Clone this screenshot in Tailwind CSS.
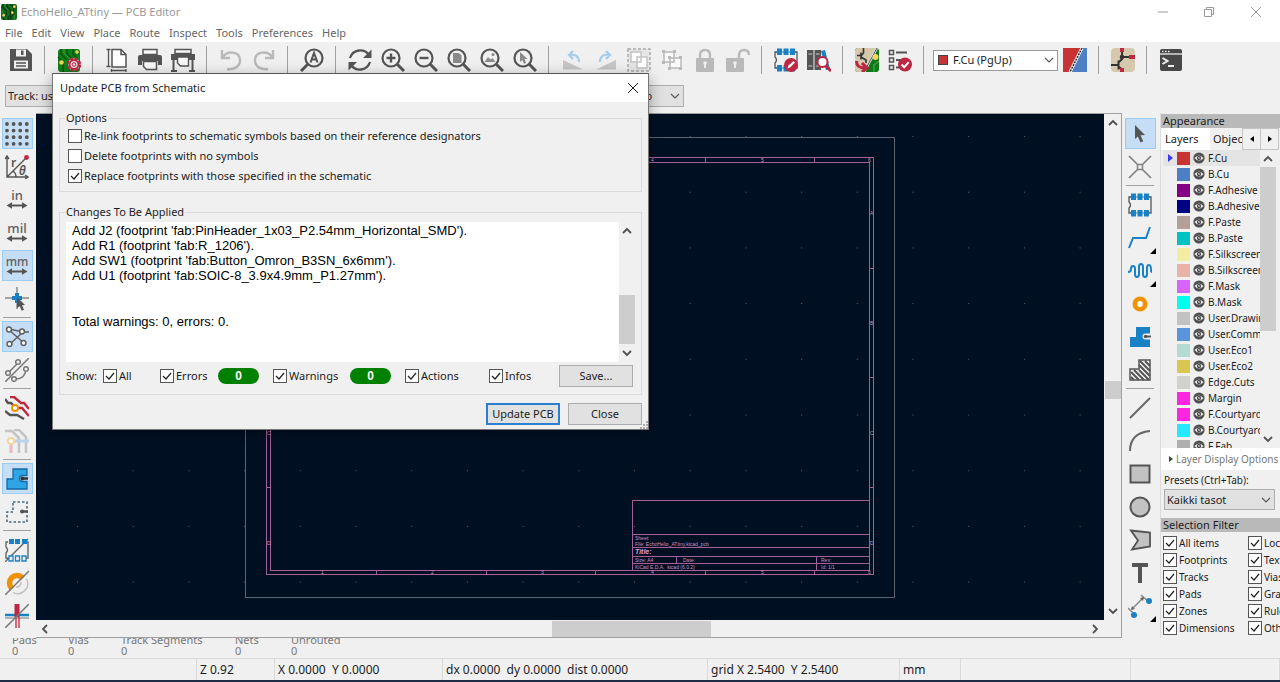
<!DOCTYPE html>
<html lang="en">
<head>
<meta charset="utf-8">
<title>EchoHello_ATtiny — PCB Editor</title>
<script src="https://cdn.jsdelivr.net/npm/@tailwindcss/browser@4"></script>
</head>
<body class="relative flex h-screen flex-col overflow-hidden bg-[#f0f0f0] font-['Noto_Sans',sans-serif] text-[11px] leading-4 text-[#1c1c1c]">

<svg class="hidden" aria-hidden="true">
  <defs>
    <symbol id="i-app" viewBox="0 0 24 24"><rect width="24" height="24" rx="3" fill="#136b1c"/><path d="M3 0v5l5 5v6l-4 4v4M9 0v4l5 5v8l-3 3v4M14 0l5 5v10l-4 4v5" fill="none" stroke="#0a3d10" stroke-width="2"/><path d="M6 0v4l5 5M0 10l4 4v6M20 24v-8" fill="none" stroke="#4fa04c" stroke-width="1"/><circle cx="20" cy="4" r="2" fill="#f3d45c"/><circle cx="17" cy="13" r="2" fill="#f3d45c"/><circle cx="4" cy="17" r="2" fill="#f3d45c"/></symbol>
    <symbol id="i-save" viewBox="0 0 24 24"><path d="M2 1h16l5 5v17H1V1z" fill="#545454"/><path d="M7 1.500h10v7H7z" fill="#f0f0f0"/><path d="M12 2.500h2.500V7H12z" fill="#545454"/><path d="M5 12.500h14v8H5z" fill="#f0f0f0"/><path d="M7 15h10M7 18h10" stroke="#545454" stroke-width="1.300"/></symbol>
    <symbol id="i-update" viewBox="0 0 24 24"><rect x="1" y="1" width="22" height="23" rx="3" fill="#0f7f1b"/><path d="M4 1v5l6 6M10 1v5l4 4M16 1v5l3 3M1 9l5 5v10" fill="none" stroke="#07560f" stroke-width="1.500"/><path d="M7 1v4l6 6" stroke="#3fa03f" fill="none"/><circle cx="4.500" cy="14.500" r="2.200" fill="#f3d45c"/><circle cx="20" cy="4" r="1.800" fill="#f3d45c"/><circle cx="17" cy="16.500" r="6" fill="#ddd" stroke="#bf2641" stroke-width="2.400" stroke-dasharray="3 1.710"/><circle cx="17" cy="16.500" r="4.500" fill="#ddd" stroke="#bf2641" stroke-width="1.800"/><circle cx="17" cy="16.500" r="1.800" fill="none" stroke="#bf2641"/></symbol>
    <symbol id="i-page" viewBox="0 0 24 24"><path d="M7 1.500h9l5 5V19H7z" fill="#fff" stroke="#545454" stroke-width="1.500"/><path d="M16 1.500v5h5" fill="none" stroke="#545454" stroke-width="1.500"/><path d="M3.500 1v18M1.500 1.500h4M1.500 18.500h4M6 22.500h15M6.500 21v3M21 21v3" stroke="#545454" stroke-width="1.300"/></symbol>
    <symbol id="i-print" viewBox="0 0 24 24"><path d="M5 1.500h14v5H5z" fill="#f8f8f8" stroke="#545454" stroke-width="1.500"/><path d="M2 7h20q2 0 2 2v8h-4v-4H4v4H0V9q0-2 2-2z" fill="#545454"/><path d="M5.500 13.500h13v8h-10l-3-3z" fill="#f8f8f8" stroke="#545454" stroke-width="1.500"/></symbol>
    <symbol id="i-plot" viewBox="0 0 24 24"><path d="M4 1.500h16v4H4z" fill="#f8f8f8" stroke="#545454" stroke-width="1.500"/><path d="M0 6h24v6H0z" fill="#545454"/><path d="M6.500 9h11v9h-8l-3-3z" fill="#f8f8f8" stroke="#545454" stroke-width="1.400"/><path d="M2.500 12v10M21.500 12v10M0 23h6M18 23h6" stroke="#545454" stroke-width="2"/></symbol>
    <symbol id="i-undo" viewBox="0 0 24 24"><path d="M3 2v8h8M3.500 9.500C8 2 21 3 21 12.500c0 6-6 9.500-13 8.500" fill="none" stroke="#b9b9b9" stroke-width="2.400"/></symbol>
    <symbol id="i-redo" viewBox="0 0 24 24"><path d="M21 2v8h-8M20.500 9.500C16 2 3 3 3 12.500c0 6 6 9.500 13 8.500" fill="none" stroke="#b9b9b9" stroke-width="2.400"/></symbol>
    <symbol id="i-find" viewBox="0 0 24 24"><circle cx="14" cy="10" r="8.500" fill="none" stroke="#545454" stroke-width="2.200"/><path d="M8 16l-7 7" stroke="#545454" stroke-width="3"/><path d="M10.500 14.500l3.500-9.500 3.500 9.500M11.500 11.500h5" fill="none" stroke="#545454" stroke-width="2"/></symbol>
    <symbol id="i-refresh" viewBox="0 0 24 24"><path d="M2 10C5 1 16 0 21 7M22 14c-3 9-14 10-19 3" fill="none" stroke="#545454" stroke-width="2.300"/><path d="M23.500 1.500v8.500H15zM.500 22.500V14H9z" fill="#545454"/></symbol>
    <symbol id="i-lens" viewBox="0 0 24 24"><circle cx="10" cy="10" r="8.500" fill="none" stroke="#545454" stroke-width="2.200"/><path d="M16 16l7 7" stroke="#545454" stroke-width="3"/></symbol>
    <symbol id="i-zin" viewBox="0 0 24 24"><use href="#i-lens"/><path d="M5.500 10h9M10 5.500v9" stroke="#545454" stroke-width="2.400"/></symbol>
    <symbol id="i-zout" viewBox="0 0 24 24"><use href="#i-lens"/><path d="M5.500 10h9" stroke="#545454" stroke-width="2.400"/></symbol>
    <symbol id="i-zpage" viewBox="0 0 24 24"><use href="#i-lens"/><path d="M6 5h6l2.500 2.500V15H6z" fill="#8a8a8a"/></symbol>
    <symbol id="i-zobj" viewBox="0 0 24 24"><use href="#i-lens"/><path d="M4.500 14l3.500-5 2.500 2.500L12.500 10l3 4z" fill="#8a8a8a"/><circle cx="13" cy="6.500" r="1.500" fill="#8a8a8a"/></symbol>
    <symbol id="i-zsel" viewBox="0 0 24 24"><use href="#i-lens"/><path d="M7 4l7.500 7h-3l1.500 4-2 .8L9.300 12 7 14z" fill="#8a8a8a"/></symbol>
    <symbol id="i-ccw" viewBox="0 0 24 24"><path d="M2 12v9.500h20z" fill="#c6c6c6"/><path d="M12 3L8 7l4 4M8.500 7C14 6 18 8 18 14" fill="none" stroke="#a3cde8" stroke-width="2.200"/></symbol>
    <symbol id="i-cw" viewBox="0 0 24 24"><path d="M22 12v9.500H2z" fill="#c6c6c6"/><path d="M12 3l4 4-4 4M15.500 7C10 6 6 8 6 14" fill="none" stroke="#a3cde8" stroke-width="2.200"/></symbol>
    <symbol id="i-group" viewBox="0 0 24 24"><rect x="1" y="1" width="22" height="22" fill="#e6e6e6" stroke="#aaa" stroke-width="1.500" stroke-dasharray="3 2"/><path d="M4 4h10v10H4zM10 9h10v11H10z" fill="#fff" stroke="#c4c4c4" stroke-width="1.500"/></symbol>
    <symbol id="i-ungroup" viewBox="0 0 24 24"><path d="M4 4h10v10H4zM10 10h11v10H10z" fill="#fafafa" stroke="#b9b9b9" stroke-width="1.500"/><path d="M2 2h3v3H2zM13 2h3v3h-3zM2 13h3v3H2zM8 8h3v3H8zM19 8h3v3h-3zM8 19h3v3H8zM19 19h3v3h-3z" fill="#b9b9b9"/></symbol>
    <symbol id="i-lock" viewBox="0 0 24 24"><path d="M7 11V7q0-5 5-5t5 5v4" fill="none" stroke="#b9b9b9" stroke-width="2.400"/><rect x="3" y="10" width="18" height="14" rx="1" fill="#b9b9b9"/><circle cx="12" cy="15" r="1.800" fill="#f0f0f0"/><path d="M12 15v5" stroke="#f0f0f0" stroke-width="1.800"/></symbol>
    <symbol id="i-unlock" viewBox="0 0 24 24"><path d="M13 11V7q0-5 5-5t5 5" fill="none" stroke="#b9b9b9" stroke-width="2.400"/><rect x="0" y="10" width="18" height="14" rx="1" fill="#b9b9b9"/><circle cx="9" cy="15" r="1.800" fill="#f0f0f0"/><path d="M9 15v5" stroke="#f0f0f0" stroke-width="1.800"/></symbol>
    <symbol id="i-fp" viewBox="0 0 24 24"><path d="M3 4H1v5q3 3 0 6v5h2M21 4h2v16h-2" fill="none" stroke="#545454" stroke-width="1.300"/><path d="M3 0.500h5v6.500H3zM9.500 0.500h5v6.500h-5zM16 0.500h5v6.500h-5zM3 17h5v6.500H3zM9.500 17h5v6.500h-5zM16 17h5v6.500h-5z" fill="#1a81c4"/><path d="M2 4h20M2 20h20" stroke="#1a81c4"/></symbol>
    <symbol id="i-fpedit" viewBox="0 0 24 24"><use href="#i-fp"/><circle cx="17" cy="17" r="7" fill="#bf2641"/><path d="M13.500 20.500l1-3 5-4.500 1.500 1.500-5 5z" fill="#fff"/></symbol>
    <symbol id="i-lib" viewBox="0 0 24 24"><path d="M0 2h6.500v20H0zM7.500 2H14v20H7.500z" fill="#545454"/><path d="M1.500 6h3.500M9 6h3.500M1.500 18h3.500M9 18h3.500" stroke="#ccc"/><path d="M14 3l4-1 5 19-4 1z" fill="#1a81c4"/><circle cx="15.500" cy="14" r="5" fill="#fff" stroke="#bf2641" stroke-width="2"/><path d="M19 18l5 5" stroke="#bf2641" stroke-width="3"/></symbol>
    <symbol id="i-sync" viewBox="0 0 24 24"><rect width="24" height="24" rx="3" fill="#0c7a17"/><path d="M3 0h18L8 24H3q-3 0-3-3V3q0-3 3-3z" fill="#d5c8ac"/><path d="M8.500 0v5L6 8M2 7.500h4M6 4.500v7M6 9l5 3v3" fill="none" stroke="#333" stroke-width="1.600"/><path d="M22 0L9 24" stroke="#eee" stroke-width="2.500"/><path d="M22 0L9 24" stroke="#444"/><path d="M24 13l-5 4v7" fill="none" stroke="#3fa03f" stroke-width="1.500"/><circle cx="20.500" cy="9" r="3" fill="#f3d45c"/><path d="M1.500 13c0 6 4 7 9 7M7 15l5 5-5 4" fill="none" stroke="#bf2641" stroke-width="3"/></symbol>
    <symbol id="i-drc" viewBox="0 0 24 24"><path d="M1.500 2.500h4v4h-4zM1.500 10h4v4h-4zM1.500 17.500h4v4h-4z" fill="none" stroke="#545454" stroke-width="1.500"/><path d="M8 4.500h11M8 12h6M8 19.500h4" stroke="#545454" stroke-width="1.800"/><circle cx="17" cy="16.500" r="7" fill="#bf2641"/><path d="M13.500 16.500l2.700 2.700 4.500-5" fill="none" stroke="#fff" stroke-width="2"/></symbol>
    <symbol id="i-pair" viewBox="0 0 24 24"><path d="M0 0h24v24H0z" fill="#4d7fc4"/><path d="M0 0h19L7 24H0z" fill="#c83434"/><path d="M19 0L7 24" stroke="#fff" stroke-width="3"/><path d="M19 0L7 24" stroke="#222" stroke-width="1.500" stroke-dasharray="2 1"/></symbol>
    <symbol id="i-sch" viewBox="0 0 24 24"><rect width="24" height="24" rx="4" fill="#d5c8ac"/><path d="M11 3v8l-3 3M11 9h9M0 17h7M7.500 12.500v9M8 19l4 3" fill="none" stroke="#333" stroke-width="2"/><path d="M9 0h4v4H9zM18 7h6v4h-6zM9 20h4v4H9z" fill="#bf2641"/><circle cx="11" cy="9" r="2.300" fill="#333"/></symbol>
    <symbol id="i-term" viewBox="0 0 24 24"><rect x="1" y="1" width="22" height="22" rx="2" fill="#484848"/><path d="M1 6h22" stroke="#eee" stroke-width="1.300"/><path d="M3 3.500h1.500M6 3.500h1.500M9 3.500h1.500" stroke="#eee" stroke-width="1.500"/><path d="M3.500 10l5 3-5 3M9 18h6" fill="none" stroke="#eee" stroke-width="2"/></symbol>

    <symbol id="i-grid" viewBox="0 0 24 24"><g fill="none" stroke="#545454" stroke-width="3.800" stroke-linecap="round" stroke-dasharray="0 6.600"><path d="M2 2h21M2 8.600h21M2 15.200h21M2 21.800h21"/></g></symbol>
    <symbol id="i-polar" viewBox="0 0 24 24"><path d="M2 1v21h21M0 4l2-3 2 3M20 20l3 2-3 2M2 22L21 3M8 16q3 2 3 6" fill="none" stroke="#545454" stroke-width="1.400"/><circle cx="21.500" cy="2.500" r="2.400" fill="#bf2641"/><text x="6" y="12" font-size="12" font-weight="600" fill="#545454">r</text><text x="14" y="20" font-size="12" font-style="italic" font-weight="600" fill="#545454">θ</text></symbol>
    <symbol id="i-arrow2" viewBox="0 0 24 24"><path d="M5 17.500h14" stroke="#545454" stroke-width="2"/><path d="M1.500 17.500l5.500-3.200v6.400zM22.500 17.500L17 14.300v6.400z" fill="#545454"/></symbol>
    <symbol id="i-in" viewBox="0 0 24 24"><use href="#i-arrow2"/><text x="12" y="12" text-anchor="middle" font-size="13" font-weight="500" fill="#606060">in</text></symbol>
    <symbol id="i-mil" viewBox="0 0 24 24"><use href="#i-arrow2"/><text x="12" y="12" text-anchor="middle" font-size="13" font-weight="500" fill="#606060">mil</text></symbol>
    <symbol id="i-mm" viewBox="0 0 24 24"><use href="#i-arrow2"/><text x="12" y="12" text-anchor="middle" font-size="12" font-weight="500" fill="#606060">mm</text></symbol>
    <symbol id="i-cross" viewBox="0 0 24 24"><path d="M0 11h24M12 0v22" stroke="#888" stroke-width="1.500"/><path d="M7 11h10M12 6v10" stroke="#1a81c4" stroke-width="4"/><path d="M12 10l8 8-3 .3 2 4.500-2.300 1-1.900-4.600L12 21z" fill="#545454"/></symbol>
    <symbol id="i-rats" viewBox="0 0 24 24"><path d="M4 5L19 18M5 19L18 7M4 4l14 3h6" stroke="#606060" stroke-width="1.500" fill="none"/><g fill="#fff" stroke="#606060" stroke-width="1.500"><circle cx="4" cy="4.500" r="2.400"/><circle cx="17" cy="6.500" r="2.400"/><circle cx="4.500" cy="19" r="2.400"/><circle cx="18.500" cy="18" r="2.400"/></g></symbol>
    <symbol id="i-curved" viewBox="0 0 24 24"><path d="M0 24L24 0M4 14l9-9M9 21q11 1 12-10" fill="none" stroke="#777" stroke-width="1.500"/><g fill="#f0f0f0" stroke="#777" stroke-width="1.500"><circle cx="3" cy="15" r="2.300"/><circle cx="13" cy="4" r="2.300"/><circle cx="9" cy="21" r="2.300"/><circle cx="21" cy="11" r="2.300"/></g></symbol>
    <symbol id="i-hc" viewBox="0 0 24 24"><path d="M5 1h4l7 6h3l5 6" fill="none" stroke="#bf2641" stroke-width="2.400"/><path d="M10 12h7l7 8" fill="none" stroke="#bf2641" stroke-width="2.400"/><path d="M0 3l3 4h3l4 4M0 15l5 4h7l7 4" fill="none" stroke="#545454" stroke-width="2.400"/><circle cx="10" cy="12" r="3" fill="#fff" stroke="#f29100" stroke-width="2"/></symbol>
    <symbol id="i-dim" viewBox="0 0 24 24"><path d="M0 2h7l7 7v15M9 1h5l7 7v16" fill="none" stroke="#c4c4c4" stroke-width="2.500"/><path d="M6 14v10" stroke="#e9b9c1" stroke-width="3"/><path d="M8 12h16" stroke="#b6d5ea" stroke-width="3"/><circle cx="6" cy="12" r="3" fill="#fff" stroke="#f5d4a0" stroke-width="2"/></symbol>
    <symbol id="i-zone" viewBox="0 0 24 24"><path d="M8 2h14v6.500h-4.500a3 3 0 1 0 0 6H22V22H2V12h6z" fill="#2fa5e3" stroke="#1469a8" stroke-width="1.300"/><path d="M16 11.500h7" stroke="#333" stroke-width="2.500"/><circle cx="17.500" cy="11.500" r="2" fill="#333"/></symbol>
    <symbol id="i-zoneout" viewBox="0 0 24 24"><path d="M8 2h14v20H2V12h6z" fill="none" stroke="#4b6a80" stroke-width="1.600" stroke-dasharray="2.500 2"/><path d="M16 11.500h7" stroke="#545454" stroke-width="2.500"/><circle cx="17" cy="11.500" r="2" fill="#545454"/></symbol>
    <symbol id="i-fpout" viewBox="0 0 24 24"><path d="M3 4H1v5q3 3 0 6v5h2M21 4h2v16h-2M23 1L0 24" fill="none" stroke="#666" stroke-width="1.400"/><path d="M4 1h5v5H4zM10 1h5v5h-5zM17 1h5v5h-5z" fill="#1a81c4"/><path d="M4 18h4v5H4zM10.500 18h4v5h-4zM17 18h4v5h-4z" fill="#f0f0f0" stroke="#1a81c4" stroke-width="1.300"/></symbol>
    <symbol id="i-viaout" viewBox="0 0 24 24"><circle cx="12" cy="12" r="7.500" fill="none" stroke="#f29100" stroke-width="5.500"/><path d="M24 1v23H1z" fill="#f0f0f0"/><path d="M21.500 8a10 10 0 0 1-13.500 13.500M16 11a4.500 4.500 0 0 1-5 5" fill="none" stroke="#bbb" stroke-width="1.300"/><path d="M24 0L0 24" stroke="#777" stroke-width="1.500"/></symbol>
    <symbol id="i-trackout" viewBox="0 0 24 24"><path d="M0 11h24" stroke="#1a81c4" stroke-width="2.500"/><path d="M0 14h24" stroke="#777"/><path d="M12 0v13" stroke="#bf2641" stroke-width="5"/><path d="M11 13v11M14 13v11" stroke="#bf2641" stroke-width="1.300"/><path d="M24 0L0 24" stroke="#777" stroke-width="1.500"/></symbol>

    <symbol id="i-select" viewBox="0 0 24 24"><path d="M7 3l10 10-4.500.3 2.700 6-2.600 1.200-2.700-6L7 17z" fill="#545454"/></symbol>
    <symbol id="i-local" viewBox="0 0 24 24"><path d="M1 1l22 22M23 1L1 23" stroke="#808080" stroke-width="1.700"/><rect x="9.500" y="9.500" width="5" height="5" rx="1" fill="#f0f0f0" stroke="#808080" stroke-width="1.500"/></symbol>
    <symbol id="i-route" viewBox="0 0 24 24"><path d="M1 22l4-10h13l4-11" fill="none" stroke="#1a81c4" stroke-width="2"/></symbol>
    <symbol id="i-tune" viewBox="0 0 24 24"><path d="M0 13q3 0 3-3 0-3 2-3t2 3v5q0 3 2 3t2-3V8q0-3 2-3t2 3v7q0 3 2 3t2-3V9q0-3 2-3t2 5q0 2 1 2" fill="none" stroke="#1a81c4" stroke-width="2"/></symbol>
    <symbol id="i-via" viewBox="0 0 24 24"><circle cx="12" cy="12" r="5.200" fill="#fff" stroke="#f29100" stroke-width="4.600"/></symbol>
    <symbol id="i-zone2" viewBox="0 0 24 24"><path d="M8 2h14v6.500h-4.500a3 3 0 1 0 0 6H22V22H2V12h6z" fill="#1a81c4"/><path d="M17 11.500h6" stroke="#545454" stroke-width="2"/><circle cx="17.500" cy="11.500" r="1.700" fill="#545454"/></symbol>
    <symbol id="i-rule" viewBox="0 0 24 24"><path d="M11 2h11v20H2V11h9z" fill="#f0f0f0" stroke="#545454" stroke-width="1.500"/><path d="M12 3l10 10M11 7l11 11M11 12l10 10M6 12l10 10M3 14l8 8M3 19l3 3M17 3l5 5" stroke="#545454" stroke-width="2"/></symbol>
    <symbol id="i-line" viewBox="0 0 24 24"><path d="M2 22L22 2" stroke="#666" stroke-width="2"/></symbol>
    <symbol id="i-arc" viewBox="0 0 24 24"><path d="M2 22Q2 4 22 2" fill="none" stroke="#666" stroke-width="2"/></symbol>
    <symbol id="i-rect" viewBox="0 0 24 24"><rect x="2.500" y="3.500" width="19" height="17" fill="#c2c2c2" stroke="#545454" stroke-width="2"/></symbol>
    <symbol id="i-circle" viewBox="0 0 24 24"><circle cx="12" cy="12" r="9.500" fill="#c2c2c2" stroke="#545454" stroke-width="2"/></symbol>
    <symbol id="i-poly" viewBox="0 0 24 24"><path d="M3 2.500l19 2v14L4 21.500l6-9z" fill="#c2c2c2" stroke="#545454" stroke-width="1.800"/></symbol>
    <symbol id="i-text" viewBox="0 0 24 24"><path d="M4 2h16v4h-6v16h-4V6H4z" fill="#545454"/></symbol>
    <symbol id="i-dimension" viewBox="0 0 24 24"><path d="M0 14l7 7M13 1l8 7M4 15L15 4" stroke="#888" stroke-width="1.500"/><path d="M3 16l1-4 3 3zM16 3l-1 4-3-3z" fill="#666"/><circle cx="21" cy="7" r="3" fill="#1a81c4"/><circle cx="6" cy="21" r="3" fill="#1a81c4"/></symbol>
    <symbol id="i-eye" viewBox="0 0 12 12"><circle cx="6" cy="6" r="5.600" fill="#505050"/><path d="M1.500 6Q6 1 10.500 6 6 11 1.500 6z" fill="#eee"/><circle cx="6" cy="6" r="2.200" fill="#505050"/><circle cx="6" cy="6" r=".8" fill="#eee"/></symbol>
    <symbol id="i-down" viewBox="0 0 10 10"><path d="M1 3l4 4 4-4" fill="none" stroke="#555" stroke-width="1.100"/></symbol>
    <symbol id="i-up" viewBox="0 0 10 10"><path d="M1 7l4-4 4 4" fill="none" stroke="currentColor" stroke-width="1.800"/></symbol>
    <symbol id="i-downb" viewBox="0 0 10 10"><path d="M1 3l4 4 4-4" fill="none" stroke="currentColor" stroke-width="1.800"/></symbol>
    <symbol id="i-left" viewBox="0 0 10 10"><path d="M7 1L3 5l4 4" fill="none" stroke="currentColor" stroke-width="1.800"/></symbol>
    <symbol id="i-right" viewBox="0 0 10 10"><path d="M3 1l4 4-4 4" fill="none" stroke="currentColor" stroke-width="1.800"/></symbol>
    <symbol id="i-x" viewBox="0 0 12 12"><path d="M1 1l10 10M11 1L1 11" fill="none" stroke="currentColor"/></symbol>
  </defs>
</svg>

<!-- Title bar -->
<header class="flex h-6 shrink-0 items-center bg-white pl-px text-[#999]">
  <svg class="size-4"><use href="#i-app"/></svg>
  <h1 class="ml-1">EchoHello_ATtiny — PCB Editor</h1>
  <div class="ml-auto flex h-full">
    <button class="grid w-[46px] place-items-center" aria-label="Minimize"><svg class="size-3"><path d="M1 6h10" stroke="#999"/></svg></button>
    <button class="grid w-[46px] place-items-center" aria-label="Restore"><svg class="size-3" fill="none" stroke="#999"><path d="M1.500 3.500h7v7h-7zM3.500 3.500v-2h7v7h-2"/></svg></button>
    <button class="grid w-[48px] place-items-center" aria-label="Close window"><svg class="size-3"><use href="#i-x"/></svg></button>
  </div>
</header>
<nav class="flex h-[18px] shrink-0 items-center gap-[9px] bg-white pl-[5px] text-[#666]" id="menu"></nav>

<!-- Main toolbar -->
<div class="flex h-9 shrink-0 items-center pl-1" id="toolbar"></div>
<div class="flex h-[35px] shrink-0 items-center pl-[5px]">
  <div class="grid w-[225px] items-center">
    <select aria-label="Track width" class="col-start-1 row-start-1 h-[22px] appearance-none border border-[#adadad] bg-[#e1e1e1] pl-[2px]"><option>Track: use netclass width</option></select>
  </div>
  <div class="ml-[357px] grid w-[97px] items-center">
    <select aria-label="Zoom" class="col-start-1 row-start-1 h-[22px] appearance-none border border-[#adadad] bg-[#e1e1e1] pl-[7px]"><option>Zoom Auto</option></select>
    <svg class="pointer-events-none col-start-1 row-start-1 mr-1 size-[10px] justify-self-end"><use href="#i-down"/></svg>
  </div>
</div>

<main class="flex min-h-0 flex-1">
  <div class="flex w-9 shrink-0 flex-col items-center pt-1 pr-[2px]" id="left"></div>

  <section class="flex min-w-0 flex-1 flex-col border-t border-[#a0a0a0]">
    <div class="flex min-h-0 flex-1">
      <svg class="min-w-0 flex-1 bg-[#001023]" font-family="Liberation Sans, sans-serif" font-size="5" fill="#d48cc0">
        <defs><pattern id="dots" x="41" y="22" width="55.700" height="55.700" patternUnits="userSpaceOnUse"><rect width="1" height="1" fill="#56605f"/></pattern></defs>
        <rect width="100%" height="100%" fill="url(#dots)"/>
        <rect x="209.500" y="23.500" width="649" height="460" fill="none" stroke="#5b6470"/>
        <g fill="none" stroke="#a4609a">
          <rect x="230.500" y="43.500" width="607" height="417"/>
          <rect x="234.500" y="48.500" width="599" height="408"/>
          <path d="M340.500 456v5M450.500 456v5M559.500 456v5M669.500 456v5M778.500 456v5M340.500 43v5M450.500 43v5M559.500 43v5M669.500 43v5M778.500 43v5M230 154.500h4M230 263.500h4M230 373.500h4M834 154.500h4M834 263.500h4M834 373.500h4"/>
          <path d="M596.500 456V386.500H833M596 420.500h237M596 433.500h237M596 442.500h237M596 449.500h237M640.500 442v7M780.500 442v14"/>
        </g>
        <g id="frame-marks"></g>
        <text x="599" y="426">Sheet:</text>
        <text x="599" y="432">File: EchoHello_ATtiny.kicad_pcb</text>
        <text x="599" y="440" font-size="7" font-weight="bold" font-style="italic" fill="#e79ad2">Title:</text>
        <text x="599" y="448">Size: A4</text><text x="647" y="448">Date:</text><text x="785" y="448">Rev:</text>
        <text x="599" y="455" xml:space="preserve">KiCad E.D.A.  kicad (6.0.2)</text><text x="785" y="455">Id: 1/1</text>
      </svg>
      <div class="flex w-[18px] shrink-0 flex-col items-center border-r border-[#a0a0a0] py-1 text-[#505050]">
        <svg class="size-[10px]"><use href="#i-up"/></svg>
        <div class="grow-[250]"></div><div class="h-[18px] w-4 bg-[#cdcdcd]"></div><div class="grow-[205]"></div>
        <svg class="size-[10px]"><use href="#i-downb"/></svg>
      </div>
    </div>
    <div class="flex h-[18px] shrink-0 items-center border-r border-b border-[#a0a0a0] pr-[21px] pl-1 text-[#505050]">
      <svg class="size-[10px]"><use href="#i-left"/></svg>
      <div class="grow-[502]"></div><div class="h-4 w-[159px] bg-[#cdcdcd]"></div><div class="grow-[379]"></div>
      <svg class="size-[10px]"><use href="#i-right"/></svg>
    </div>
  </section>

  <div class="flex w-[38px] shrink-0 flex-col items-center pt-1 pr-[2px]" id="right"></div>

  <!-- Appearance panel -->
  <aside class="flex w-[120px] shrink-0 flex-col overflow-hidden border-l border-[#dcdcdc]">
    <h2 class="mt-px h-[14px] shrink-0 bg-[#b9b9b9] pl-[2px] leading-[14px]">Appearance</h2>
    <div class="flex h-[22px] shrink-0">
      <button class="w-[49px] bg-white pl-1 text-left">Layers</button>
      <button class="w-8 overflow-hidden pl-[3px] text-left">Objects</button>
      <button class="grid w-[19px] place-items-center border border-[#c4c4c4]" aria-label="Previous tab"><svg class="size-[6px]"><path d="M5 0v6L1 3z"/></svg></button>
      <button class="grid w-[18px] place-items-center border border-l-0 border-[#c4c4c4]" aria-label="Next tab"><svg class="size-[6px]"><path d="M1 0v6l4-3z"/></svg></button>
    </div>
    <div class="flex min-h-0 flex-1 overflow-hidden pl-[2px]">
      <ul class="w-[97px] shrink-0 overflow-hidden" id="layers"></ul>
      <div class="flex w-4 flex-col items-center pt-1 pb-1 text-[#505050]">
        <svg class="size-[10px]"><use href="#i-up"/></svg>
        <div class="mt-[3px] h-[164px] w-4 bg-[#cdcdcd]"></div>
        <svg class="mt-auto size-[10px]"><use href="#i-downb"/></svg>
      </div>
    </div>
    <button class="flex h-[22px] shrink-0 items-center gap-[2px] bg-white pl-[7px] text-[10px] whitespace-nowrap text-[#777]"><svg class="size-[6px] shrink-0" fill="#444"><path d="M1 0v6l4-3z"/></svg>Layer Display Options</button>
    <label class="mt-[2px] h-[17px] shrink-0 pl-[3px] text-[10px]" for="preset">Presets (Ctrl+Tab):</label>
    <div class="ml-[3px] grid w-[111px] shrink-0 items-center">
      <select id="preset" class="col-start-1 row-start-1 h-[21px] appearance-none border border-[#adadad] bg-[#e1e1e1] pl-[2px]"><option>Kaikki tasot</option></select>
      <svg class="pointer-events-none col-start-1 row-start-1 mr-1 size-[10px] justify-self-end"><use href="#i-down"/></svg>
    </div>
    <h2 class="mt-2 h-[14px] shrink-0 bg-[#b9b9b9] pl-[2px] leading-[14px]">Selection Filter</h2>
    <div class="mt-[2px] mb-[2px] ml-[2px] grid shrink-0 auto-rows-[17px] grid-cols-[85px_85px] items-center text-[10px]" id="filter"></div>
  </aside>
</main>

<!-- Message panel: labels are scrolled partly under its top edge -->
<dl class="flex h-5 shrink-0 items-end overflow-hidden pl-3 text-[#777]" id="msgs"></dl>

<footer class="flex h-6 shrink-0 items-center border-t border-b-2 border-t-[#d9d9d9] border-b-[#1f2a44] text-[12px] whitespace-pre" id="status"></footer>

<!-- Update PCB dialog -->
<div role="dialog" aria-labelledby="dlg-title" class="absolute top-[73px] left-[52px] flex w-[597px] flex-col border border-[#777] border-t-[#555] bg-[#f0f0f0] shadow-[0_4px_14px_rgba(0,0,0,0.35)]">
  <div class="flex h-7 items-center bg-white pr-[9px] pl-[7px]">
    <h2 id="dlg-title">Update PCB from Schematic</h2>
    <button class="ml-auto text-[#222]" aria-label="Close dialog"><svg class="size-3"><use href="#i-x"/></svg></button>
  </div>
  <div class="flex flex-col px-[6px] pt-2 pb-1">
    <fieldset class="border border-[#dcdcdc] px-2 pb-[7px]">
      <legend class="-ml-[3px] px-px">Options</legend>
      <div class="mt-[2px] flex flex-col gap-1" id="options"></div>
    </fieldset>
    <fieldset class="mt-3 border border-[#dcdcdc] px-[6px] pb-[7px]">
      <legend class="-ml-px px-px">Changes To Be Applied</legend>
      <div class="mt-[2px] flex h-[140px] overflow-hidden bg-white">
        <div class="min-w-0 flex-1 pt-px pl-[6px] font-['Liberation_Sans',sans-serif] text-[13px] leading-[15px] whitespace-nowrap text-black">
          <p>Add J2 (footprint 'fab:PinHeader_1x03_P2.54mm_Horizontal_SMD').</p>
          <p>Add R1 (footprint 'fab:R_1206').</p>
          <p>Add SW1 (footprint 'fab:Button_Omron_B3SN_6x6mm').</p>
          <p>Add U1 (footprint 'fab:SOIC-8_3.9x4.9mm_P1.27mm').</p>
          <p class="mt-[31px]">Total warnings: 0, errors: 0.</p>
        </div>
        <div class="flex w-4 flex-col items-center bg-[#f0f0f0] pt-1 pb-1 text-[#505050]">
          <svg class="size-[10px]"><use href="#i-up"/></svg>
          <div class="mt-auto mb-1 h-[49px] w-4 bg-[#cdcdcd]"></div>
          <svg class="size-[10px]"><use href="#i-downb"/></svg>
        </div>
      </div>
      <div class="mt-[3px] flex h-[22px] items-center pr-[2px]" id="show"></div>
    </fieldset>
    <div class="mt-2 flex justify-end gap-2">
      <button class="h-[22px] w-[74px] border-2 border-[#2a7fd0] bg-[#e1e1e1]">Update PCB</button>
      <button class="h-[22px] w-[74px] border border-[#adadad] bg-[#e1e1e1]">Close</button>
    </div>
  </div>
  <svg class="absolute right-0 bottom-0 size-2" fill="#aaa"><path d="M6 0h2v2H6zM3 3h2v2H3zM6 3h2v2H6zM0 6h2v2H0zM3 6h2v2H3zM6 6h2v2H6z"/></svg>
</div>

<script>
const $ = id => document.getElementById(id);
const fill = (id, items, f) => { $(id).innerHTML = items.map(f).join(''); };

fill('menu', ['File','Edit','View','Place','Route','Inspect','Tools','Preferences','Help'], m => `<button>${m}</button>`);

const check = (label, on = true) => `<label class="flex items-center gap-[2px] whitespace-nowrap"><span class="grid shrink-0"><input type="checkbox" class="peer col-start-1 row-start-1 size-[14px] appearance-none border border-[#555] bg-white" ${on ? 'checked' : ''}><svg class="pointer-events-none col-start-1 row-start-1 hidden size-[14px] peer-checked:block" fill="none" stroke="#222" stroke-width="1.200"><path d="M3 7l3 3 5-6"/></svg></span>${label}</label>`;

const bar = 'save:Save | update:Update PCB | page:Page settings,print:Print,plot:Plot | undo:Undo,redo:Redo | find:Find | refresh:Refresh,zin:Zoom in,zout:Zoom out,zpage:Zoom to page,zobj:Zoom to objects,zsel:Zoom to selection | ccw:Rotate left,cw:Rotate right,group:Group,ungroup:Ungroup,lock:Lock,unlock:Unlock | fpedit:Footprint editor,lib:Footprint libraries | sync:Update from schematic,drc:Design rules checker | @ | sch:Schematic editor | term:Scripting console';
const layerPick = `<div class="ml-[2px] grid w-[125px] items-center"><select aria-label="Active layer" class="col-start-1 row-start-1 h-[21px] appearance-none border border-[#999] bg-white pl-[19px]"><option>F.Cu (PgUp)</option></select><span class="pointer-events-none col-start-1 row-start-1 ml-[5px] size-[10px] border border-[#444] bg-[#c83434]"></span><svg class="pointer-events-none col-start-1 row-start-1 mr-1 size-[10px] justify-self-end"><use href="#i-down"/></svg></div>`;
const tool = s => { const [i, t] = s.split(':'); return `<button class="grid w-[33px] shrink-0 place-items-center" aria-label="${t}"><svg class="size-6"><use href="#i-${i}"/></svg></button>`; };
$('toolbar').innerHTML = bar.split(' | ').map(g => g === '@' ? layerPick + tool('pair:Layer pair') : g.split(',').map(tool).join(''))
  .join('<span class="flex h-7 w-[15px] shrink-0 justify-center"><span class="w-px bg-[#a0a0a0]"></span></span>');

const vtool = (on, more) => s => { const [i, t] = s.split(':'); return s === '|' ? '<hr class="my-[2px] w-7 shrink-0 border-[#a0a0a0]">' :
  `<div class="relative grid h-[33px] shrink-0 place-items-center"><button class="grid size-[31px] place-items-center border ${on.includes(i) ? 'border-[#99cdf5] bg-[#c5def5]' : 'border-transparent'}" aria-label="${t}"><svg class="size-6"><use href="#i-${i}"/></svg></button>${more.includes(i) ? '<svg class="absolute right-0 bottom-0 size-[6px]"><path d="M6 0v6H0z"/></svg>' : ''}</div>`; };
fill('left', ['grid:Grid','polar:Polar coordinates','in:Inches','mil:Mils','mm:Millimeters','cross:Full cursor','|','rats:Ratsnest','curved:Curved ratsnest','|','hc:High contrast','dim:Net highlighting','|','zone:Filled zones','zoneout:Zone outlines','|','fpout:Sketch pads','viaout:Sketch vias','trackout:Sketch tracks'], vtool(['grid','mm','rats','zone'], []));
fill('right', ['select:Select','local:Local ratsnest','|','fp:Add footprint','route:Route track','tune:Tune length','via:Add via','zone2:Add zone','rule:Add rule area','|','line:Line','arc:Arc','rect:Rectangle','circle:Circle','poly:Polygon','text:Text','dimension:Dimension'], vtool(['select'], ['route','tune','dimension']));

fill('layers', [['F.Cu','#c83434'],['B.Cu','#4d7fc4'],['F.Adhesive','#840084'],['B.Adhesive','#000084'],['F.Paste','#b4a09a'],['B.Paste','#00c2c2'],['F.Silkscreen','#f2eda1'],['B.Silkscreen','#e8b2a7'],['F.Mask','#d864ff'],['B.Mask','#02ffee'],['User.Drawings','#c2c2c2'],['User.Comments','#5994dc'],['User.Eco1','#b4dbd2'],['User.Eco2','#d8c852'],['Edge.Cuts','#d0d2cd'],['Margin','#ff26e2'],['F.Courtyard','#ff26e2'],['B.Courtyard','#26e9ff'],['F.Fab','#afafaf']],
  ([n, c], k) => `<li class="flex h-4 items-center text-[10px] whitespace-nowrap ${k ? '' : 'bg-[#e4e4e4]'}"><span class="flex w-[14px] shrink-0 justify-center">${k ? '' : '<svg class="size-2" fill="#3a3af0"><path d="M2 0v8l5-4z"/></svg>'}</span><span class="h-[13px] w-[13px] shrink-0" style="background:${c}"></span><svg class="mx-[3px] size-3 shrink-0"><use href="#i-eye"/></svg>${n}</li>`);

fill('filter', ['All items','Locked items','Footprints','Text','Tracks','Vias','Pads','Graphics','Zones','Rule Areas','Dimensions','Other items'], n => check(n));
fill('msgs', [['Pads','w-14'],['Vias','w-[53px]'],['Track Segments','w-[114px]'],['Nets','w-14'],['Unrouted','w-20']], ([n, w]) => `<div class="${w} leading-[11px]"><dt>${n}</dt><dd class="pb-[2px]">0</dd></div>`);
fill('status', [['','w-[197px]'],['Z 0.92','w-[78px]'],['X 0.0000  Y 0.0000','w-[168px]'],['dx 0.0000  dy 0.0000  dist 0.0000','w-[265px]'],['grid X 2.5400  Y 2.5400','w-[192px]'],['mm','w-[61px]'],['','w-[170px]'],['','flex-1']], ([t, w]) => `<span class="${w} flex h-full items-center border-r border-[#dadada] pl-[3px]">${t}</span>`);

$('options').innerHTML = check('Re-link footprints to schematic symbols based on their reference designators', false) + check('Delete footprints with no symbols', false) + check('Replace footprints with those specified in the schematic');
const pill = '<span class="h-4 w-[41px] rounded-full bg-[#008000] text-center font-[\'Liberation_Sans\',sans-serif] text-[12px] font-bold text-white">0</span>';
$('show').innerHTML = '<span class="w-[37px]">Show:</span>' + [['All','w-[57px]'],['Errors','w-[58px]'],['#','w-[55px]'],['Warnings','w-[77px]'],['#','w-[55px]'],['Actions','w-[84px]'],['Infos','w-16']].map(([t, w]) => `<span class="flex ${w}">${t === '#' ? pill : check(t)}</span>`).join('') + '<button class="ml-auto h-[22px] w-[74px] border border-[#adadad] bg-[#e1e1e1]">Save...</button>';

$('frame-marks').innerHTML = [1,2,3,4,5,6].map(n => { const x = 286 + (n - 1) * 110 - (n === 6 ? 3 : 0); return `<text x="${x - 1}" y="460">${n}</text><text x="${x - 1}" y="48">${n}</text>`; }).join('')
  + ['A','B','C','D'].map((l, k) => `<text x="231" y="${101 + k * 110}">${l}</text><text x="834" y="${101 + k * 110}">${l}</text>`).join('');
</script>
</body>
</html>
